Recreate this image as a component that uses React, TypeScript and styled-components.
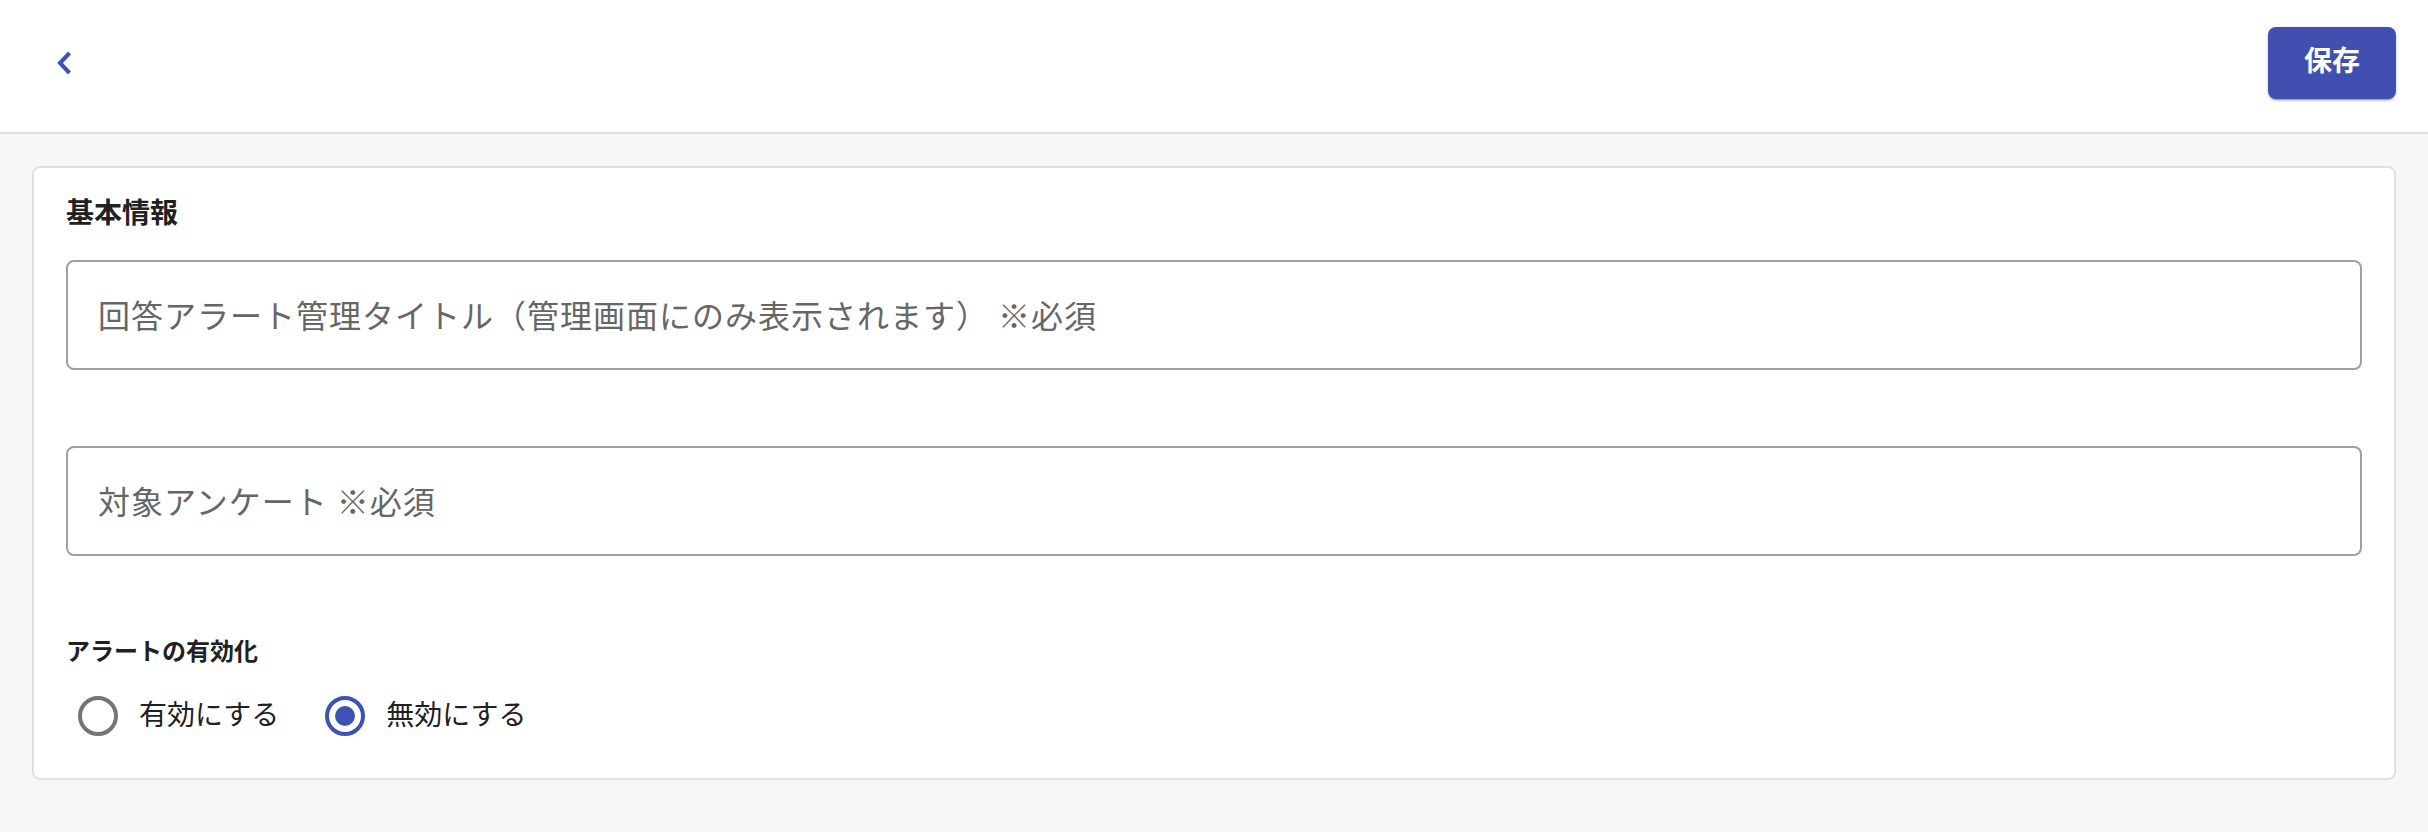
import * as React from 'react'
import styled, { createGlobalStyle } from 'styled-components'

const GlobalStyle = createGlobalStyle`
  html, body {
    margin: 0;
    padding: 0;
    background: #f6f7f9;
    font-family: Roboto, "Noto Sans CJK JP", "Noto Sans", sans-serif;
    color: #212121;
  }
  * { box-sizing: border-box; }
`

const Page = styled.div`
  min-height: 100vh;
  background: #f6f7f9;
`

const Header = styled.header`
  display: flex;
  justify-content: space-between;
  align-items: center;
  height: 134px;
  padding: 0 32px 6px 40px;
  background: #ffffff;
  border-bottom: 2px solid #e0e0e0;
`

const BackButton = styled.button`
  display: flex;
  align-items: center;
  justify-content: center;
  width: 48px;
  height: 48px;
  padding: 10px;
  border: none;
  border-radius: 50%;
  background: transparent;
  color: #3f51b5;
  cursor: pointer;

  svg {
    width: 28px;
    height: 28px;
    overflow: visible;
  }
`

const SaveButton = styled.button`
  width: 128px;
  height: 72px;
  border: none;
  border-radius: 8px;
  background: #4150b0;
  color: #ffffff;
  font-family: inherit;
  font-size: 28px;
  font-weight: 700;
  line-height: 1;
  padding: 0 0 2px;
  cursor: pointer;
  box-shadow: 0 3px 1px -2px rgba(0, 0, 0, 0.2), 0 2px 2px 0 rgba(0, 0, 0, 0.14),
    0 1px 5px 0 rgba(0, 0, 0, 0.12);
`

const Card = styled.section`
  display: flex;
  flex-direction: column;
  margin: 32px 32px 0;
  padding: 32px 32px 42px;
  background: #ffffff;
  border: 2px solid #e0e0e0;
  border-radius: 8px;
`

const SectionTitle = styled.h2`
  margin: 0 0 32px;
  font-size: 28px;
  line-height: 28px;
  font-weight: 700;
  color: #212121;
`

const TextField = styled.input<{ $gap: number }>`
  display: block;
  width: 100%;
  height: 110px;
  margin-bottom: ${({ $gap }) => $gap}px;
  padding: 4px 30px 0;
  border: 2px solid #a0a0a0;
  border-radius: 8px;
  background: #ffffff;
  font-family: inherit;
  font-size: 32px;
  letter-spacing: 1px;
  color: #212121;
  outline: none;

  &::placeholder {
    color: #666666;
    opacity: 1;
  }
`

const FieldLabel = styled.div`
  font-size: 24px;
  line-height: 24px;
  font-weight: 700;
  color: #212121;
  margin-bottom: 32px;
`

const RadioGroup = styled.div`
  display: flex;
  align-items: center;
  gap: 46px;
  padding-left: 12px;
`

const RadioOption = styled.label`
  display: flex;
  align-items: center;
  gap: 21px;
  font-size: 28px;
  line-height: 40px;
  color: #212121;
  cursor: pointer;
`

const RadioMark = styled.svg`
  width: 40px;
  height: 40px;
  flex: none;
`

const ChevronLeft = () => (
  <svg viewBox="0 0 28 28">
    <polyline
      points="19.5,4 10,14 19.5,24"
      fill="none"
      stroke="currentColor"
      strokeWidth="4"
    />
  </svg>
)

const Radio = ({ checked }: { checked: boolean }) => (
  <RadioMark viewBox="0 0 40 40">
    <circle
      cx="20"
      cy="20"
      r="18"
      fill="none"
      stroke={checked ? '#3f51b5' : '#757575'}
      strokeWidth="4"
    />
    {checked && <circle cx="20" cy="20" r="10" fill="#3f51b5" />}
  </RadioMark>
)

const options = [
  { id: 'on', label: '有効にする' },
  { id: 'off', label: '無効にする' },
]

export default function App() {
  const [enabled, setEnabled] = React.useState('off')

  return (
    <Page>
      <GlobalStyle />
      <Header>
        <BackButton aria-label="戻る">
          <ChevronLeft />
        </BackButton>
        <SaveButton>保存</SaveButton>
      </Header>

      <Card>
        <SectionTitle>基本情報</SectionTitle>
        <TextField $gap={76} placeholder="回答アラート管理タイトル（管理画面にのみ表示されます） ※必須" />
        <TextField $gap={84} placeholder="対象アンケート ※必須" />

        <FieldLabel>アラートの有効化</FieldLabel>
        <RadioGroup>
          {options.map(opt => (
            <RadioOption key={opt.id} onClick={() => setEnabled(opt.id)}>
              <Radio checked={enabled === opt.id} />
              {opt.label}
            </RadioOption>
          ))}
        </RadioGroup>
      </Card>
    </Page>
  )
}
